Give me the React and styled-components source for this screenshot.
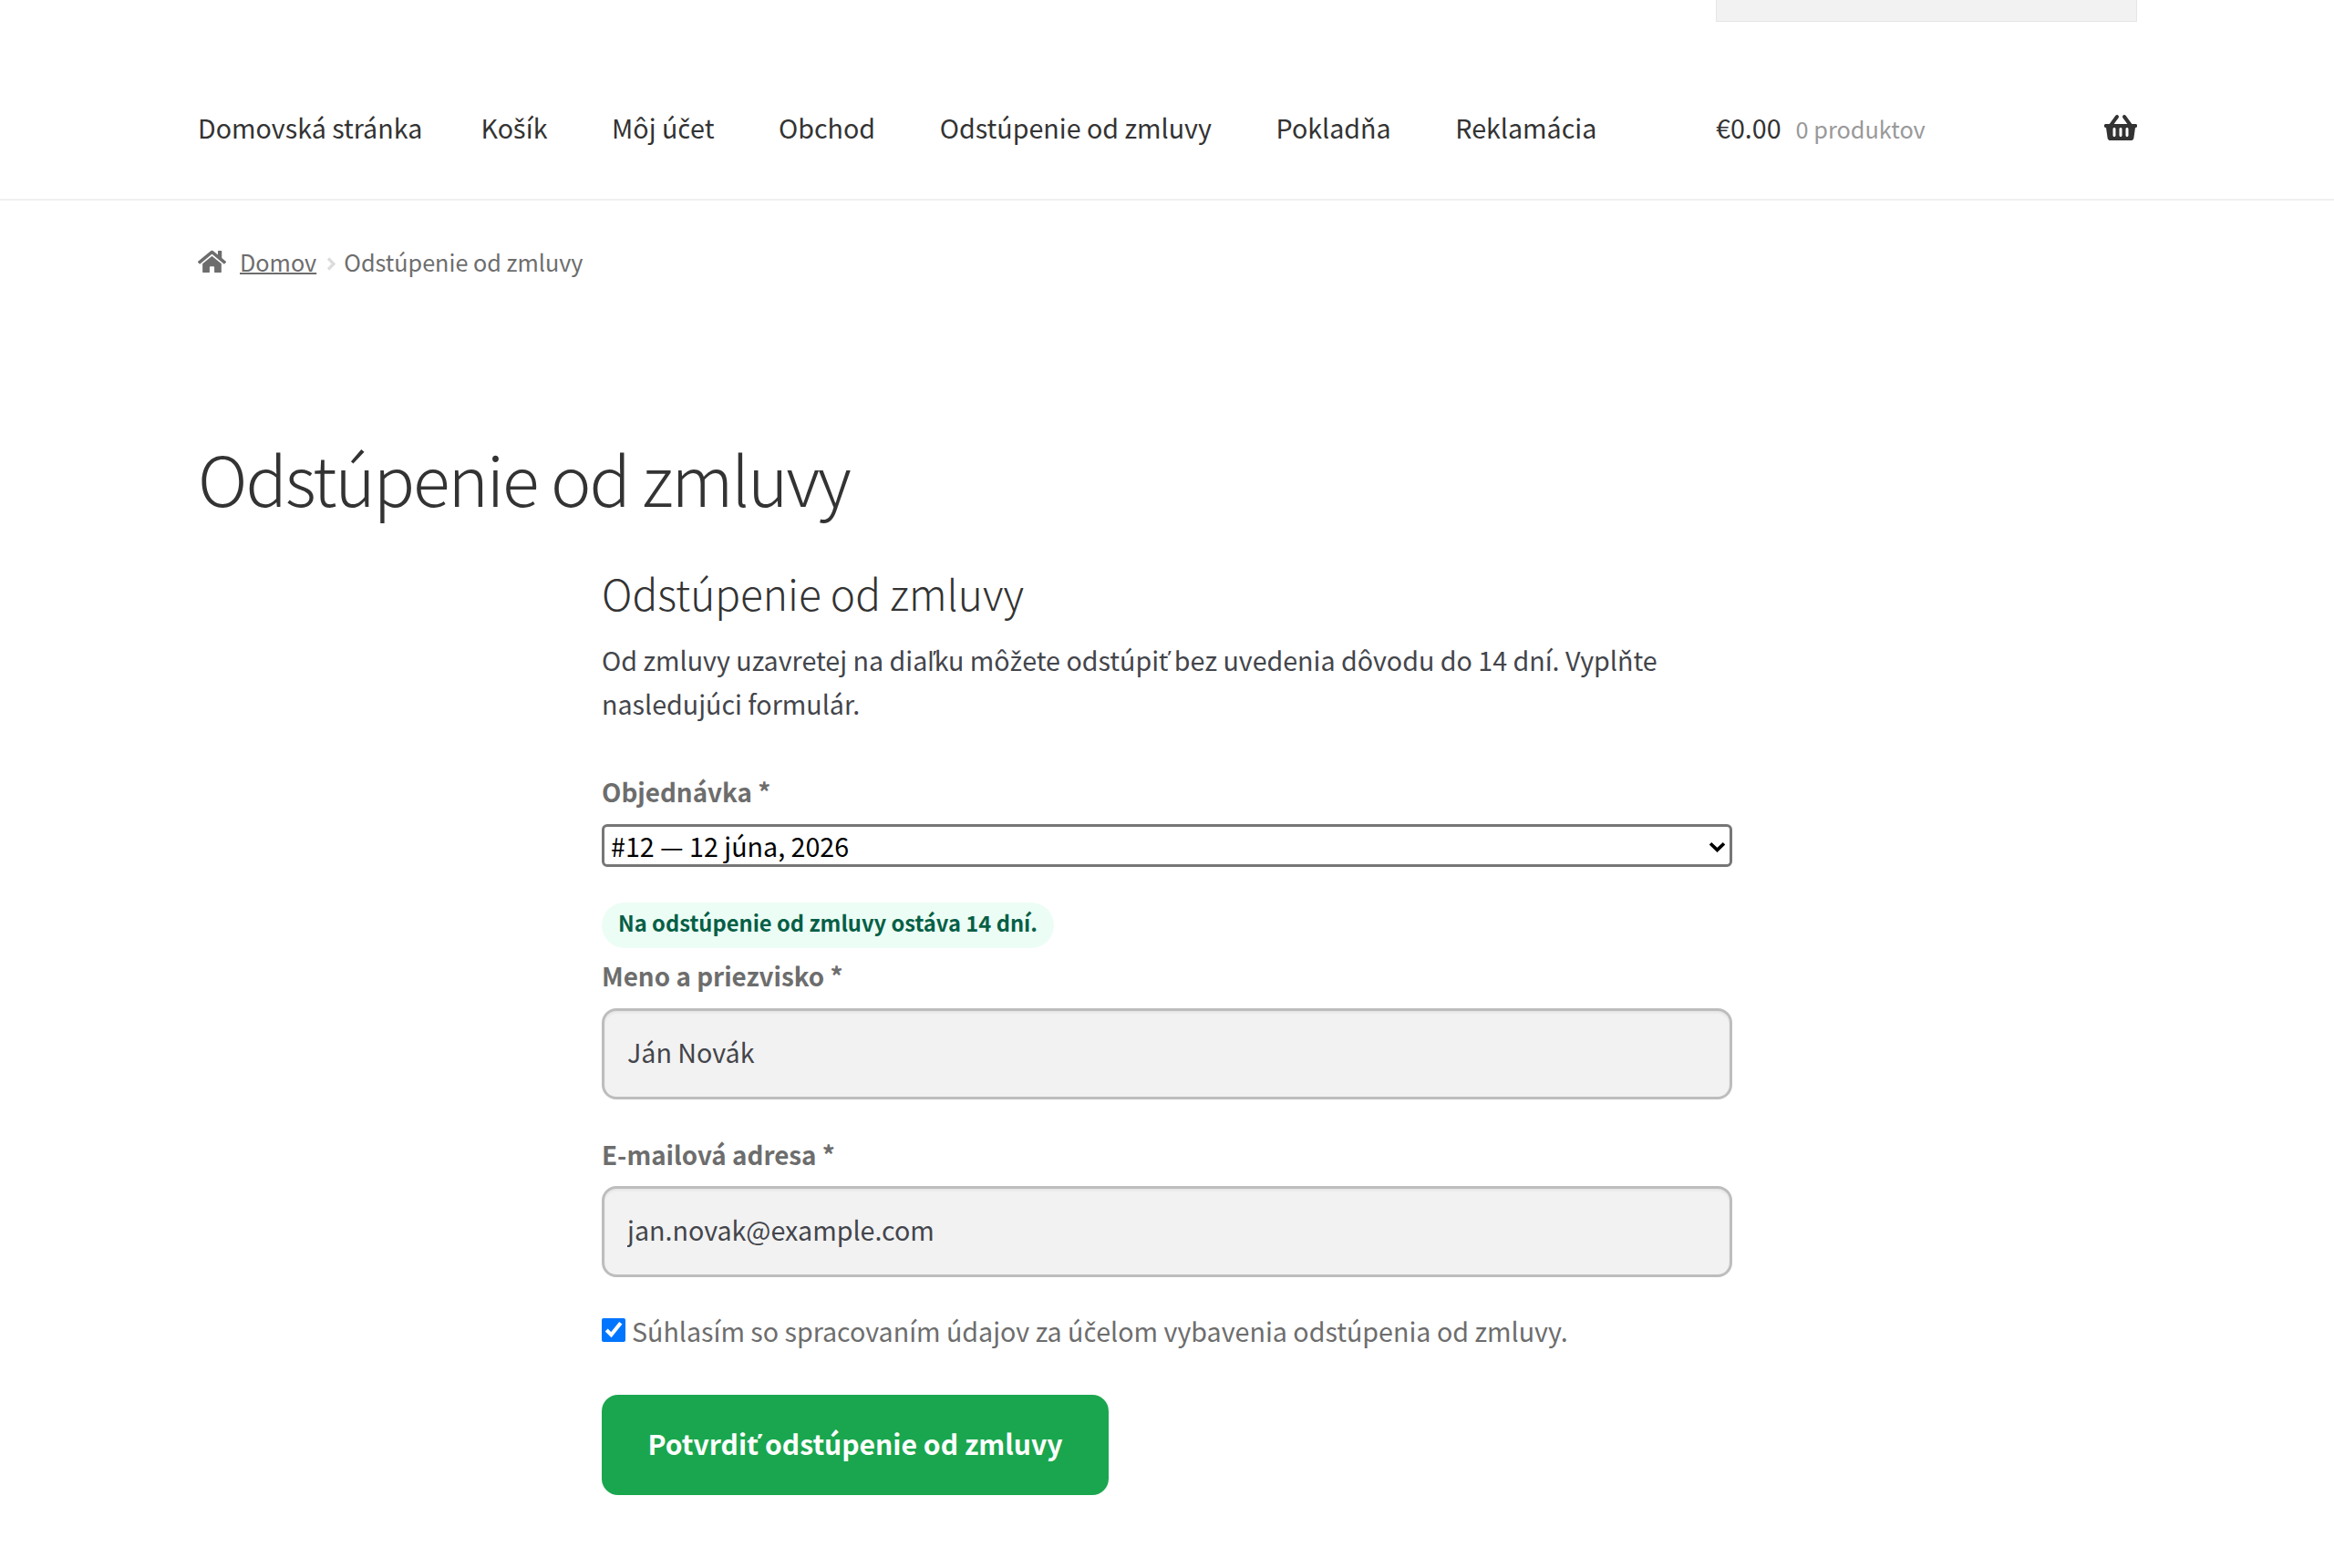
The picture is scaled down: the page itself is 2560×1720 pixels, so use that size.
import React from 'react';
import styled, { createGlobalStyle } from 'styled-components';
import { FaHome, FaShoppingBasket } from 'react-icons/fa';

const GlobalStyle = createGlobalStyle`
    html, body {
        margin: 0;
        padding: 0;
        background: #ffffff;
    }
    body {
        font-family: 'Noto Sans CJK SC', 'Noto Sans', sans-serif;
        color: #6d6d6d;
        font-size: 28.65px;
    }
`;

const navItems = ['Domovská stránka', 'Košík', 'Môj účet', 'Obchod', 'Odstúpenie od zmluvy', 'Pokladňa', 'Reklamácia'];

const Ext = styled.span`
    font-family: 'Noto Sans', sans-serif;
    line-height: 1;
`;

const Txt = ({ children }) =>
    children.split(/([šžčťľ])/).map((part, i) => (i % 2 ? <Ext key={i}>{part}</Ext> : part));

export default function App() {
    return (
        <Page>
            <GlobalStyle />
            <Header>
                <Wrap>
                    <TopBar>
                        <SearchStub />
                    </TopBar>
                    <NavRow>
                        <Nav>
                            {navItems.map(item => (
                                <NavLink href="#" key={item}><Txt>{item}</Txt></NavLink>
                            ))}
                        </Nav>
                        <Cart>
                            <Amount>€0.00</Amount>
                            <Count>0 produktov</Count>
                            <Basket><FaShoppingBasket /></Basket>
                        </Cart>
                    </NavRow>
                </Wrap>
            </Header>
            <Wrap>
                <Breadcrumb>
                    <HomeIcon><FaHome /></HomeIcon>
                    <CrumbLink href="#">Domov</CrumbLink>
                    <Chevron viewBox="0 0 10 15" aria-hidden="true">
                        <path d="M2 1.5 L8 7.5 L2 13.5" fill="none" stroke="#dcdcdc" strokeWidth="3.2" />
                    </Chevron>
                    <span>Odstúpenie od zmluvy</span>
                </Breadcrumb>
                <Title>Odstúpenie od zmluvy</Title>
                <Form onSubmit={e => e.preventDefault()}>
                    <Subtitle>Odstúpenie od zmluvy</Subtitle>
                    <Intro>
                        <Txt>Od zmluvy uzavretej na diaľku môžete odstúpiť bez uvedenia dôvodu do 14 dní. Vyplňte</Txt>
                        <br />
                        nasledujúci formulár.
                    </Intro>
                    <OrderLabel htmlFor="order">Objednávka *</OrderLabel>
                    <SelectWrap>
                        <Select id="order" defaultValue="12">
                            <option value="12">#12 — 12 júna, 2026</option>
                        </Select>
                        <SelectArrow viewBox="0 0 19 12" aria-hidden="true">
                            <path d="M2 2.2 L9.5 9.4 L17 2.2" fill="none" stroke="#000" strokeWidth="3.6" />
                        </SelectArrow>
                    </SelectWrap>
                    <Notice>Na odstúpenie od zmluvy ostáva 14 dní.</Notice>
                    <NameLabel htmlFor="name">Meno a priezvisko *</NameLabel>
                    <Input id="name" type="text" defaultValue="Ján Novák" />
                    <EmailLabel htmlFor="email">E-mailová adresa *</EmailLabel>
                    <Input id="email" type="email" defaultValue="jan.novak@example.com" />
                    <Consent>
                        <Check type="checkbox" defaultChecked />
                        <span><Txt>Súhlasím so spracovaním údajov za účelom vybavenia odstúpenia od zmluvy.</Txt></span>
                    </Consent>
                    <Submit type="submit"><Txt>Potvrdiť odstúpenie od zmluvy</Txt></Submit>
                </Form>
            </Wrap>
        </Page>
    );
}

const Page = styled.div`
    min-height: 1720px;
    overflow: hidden;
`;

const Wrap = styled.div`
    width: 2127px;
    margin-left: 217px;
`;

const Header = styled.header`
    height: 218px;
    border-bottom: 2px solid #f0f0f0;
`;

const TopBar = styled.div`
    display: flex;
    justify-content: flex-end;
`;

const SearchStub = styled.div`
    width: 462px;
    height: 24px;
    box-sizing: border-box;
    background: #f2f2f2;
    border: 1px solid #e6e6e6;
    border-top: 0;
`;

const NavRow = styled.div`
    display: flex;
    align-items: center;
    margin-top: 92px;
    height: 48px;
`;

const Nav = styled.nav`
    display: flex;
    gap: 70.6px;
    width: 1665px;
`;

const NavLink = styled.a`
    color: #333333;
    text-decoration: none;
    line-height: 48px;
    white-space: nowrap;
    &:first-child {
        margin-right: -6.5px;
    }
`;

const Cart = styled.div`
    display: flex;
    align-items: center;
    flex: 1;
    line-height: 48px;
`;

const Amount = styled.span`
    color: #333333;
`;

const Count = styled.span`
    color: #999999;
    font-size: 25.3px;
    margin-left: 16px;
    padding-top: 2px;
`;

const Basket = styled.span`
    display: flex;
    margin-left: auto;
    color: #333333;
    svg {
        width: 36px;
        height: 32px;
    }
`;

const Breadcrumb = styled.div`
    display: flex;
    align-items: center;
    margin-top: 47px;
    height: 40px;
    font-size: 25.2px;
    line-height: 40px;
    color: #6d6d6d;
`;

const HomeIcon = styled.span`
    display: flex;
    margin-right: 15px;
    svg {
        width: 31px;
        height: 28px;
    }
`;

const CrumbLink = styled.a`
    color: #6d6d6d;
    text-decoration: underline;
    text-decoration-thickness: 2px;
`;

const Chevron = styled.svg`
    width: 10px;
    height: 15px;
    margin: 4px 9px 0 11px;
`;

const Title = styled.h1`
    margin: 167px 0 0;
    font-size: 75px;
    line-height: 100px;
    font-weight: 300;
    letter-spacing: -2px;
    color: #333333;
`;

const Form = styled.form`
    display: flex;
    flex-direction: column;
    align-items: flex-start;
    width: 1240px;
    margin-left: 443px;
`;

const Subtitle = styled.h2`
    margin: 44px 0 0;
    font-size: 46px;
    line-height: 64px;
    font-weight: 300;
    color: #333333;
`;

const Intro = styled.p`
    margin: 18px 0 0;
    line-height: 47.5px;
    color: #43454b;
`;

const Label = styled.label`
    font-size: 27.8px;
    font-weight: 700;
    line-height: 40px;
    color: #6d6d6d;
`;

const OrderLabel = styled(Label)`
    margin-top: 53px;
`;

const NameLabel = styled(Label)`
    margin: 10px 0 1px;
`;

const EmailLabel = styled(Label)`
    margin-top: 40px;
`;

const SelectWrap = styled.div`
    position: relative;
    width: 100%;
    margin-top: 16px;
    display: flex;
`;

const Select = styled.select`
    appearance: none;
    width: 100%;
    height: 47px;
    box-sizing: border-box;
    padding: 0 7px;
    background: #ffffff;
    border: 3px solid #767676;
    border-radius: 6px;
    font: inherit;
    line-height: 41px;
    color: #000000;
`;

const SelectArrow = styled.svg`
    position: absolute;
    right: 7px;
    top: 19px;
    width: 19px;
    height: 12px;
    pointer-events: none;
`;

const Notice = styled.div`
    margin-top: 39px;
    height: 50px;
    padding: 0 18px;
    border-radius: 25px;
    background: #ecfdf5;
    color: #065f46;
    font-size: 23.7px;
    font-weight: 700;
    line-height: 44px;
`;

const Input = styled.input`
    width: 100%;
    height: 100px;
    box-sizing: border-box;
    margin-top: 15px;
    padding: 0 25px 6px;
    background: #f2f2f2;
    border: 3px solid #bdbdbd;
    border-radius: 16px;
    box-shadow: inset 0 2px 3px rgba(0, 0, 0, 0.06);
    font: inherit;
    color: #43454b;
`;

const Consent = styled.label`
    display: flex;
    align-items: center;
    margin-top: 39px;
    line-height: 40px;
    color: #6d6d6d;
`;

const Check = styled.input`
    width: 26px;
    height: 26px;
    margin: 0 7px 0 0;
    position: relative;
    top: -1px;
`;

const Submit = styled.button`
    margin-top: 50px;
    width: 556px;
    height: 110px;
    padding: 0 0 4px;
    border: 0;
    border-radius: 18px;
    background: #1aa64e;
    color: #ffffff;
    font: inherit;
    font-size: 30.1px;
    font-weight: 700;
`;
